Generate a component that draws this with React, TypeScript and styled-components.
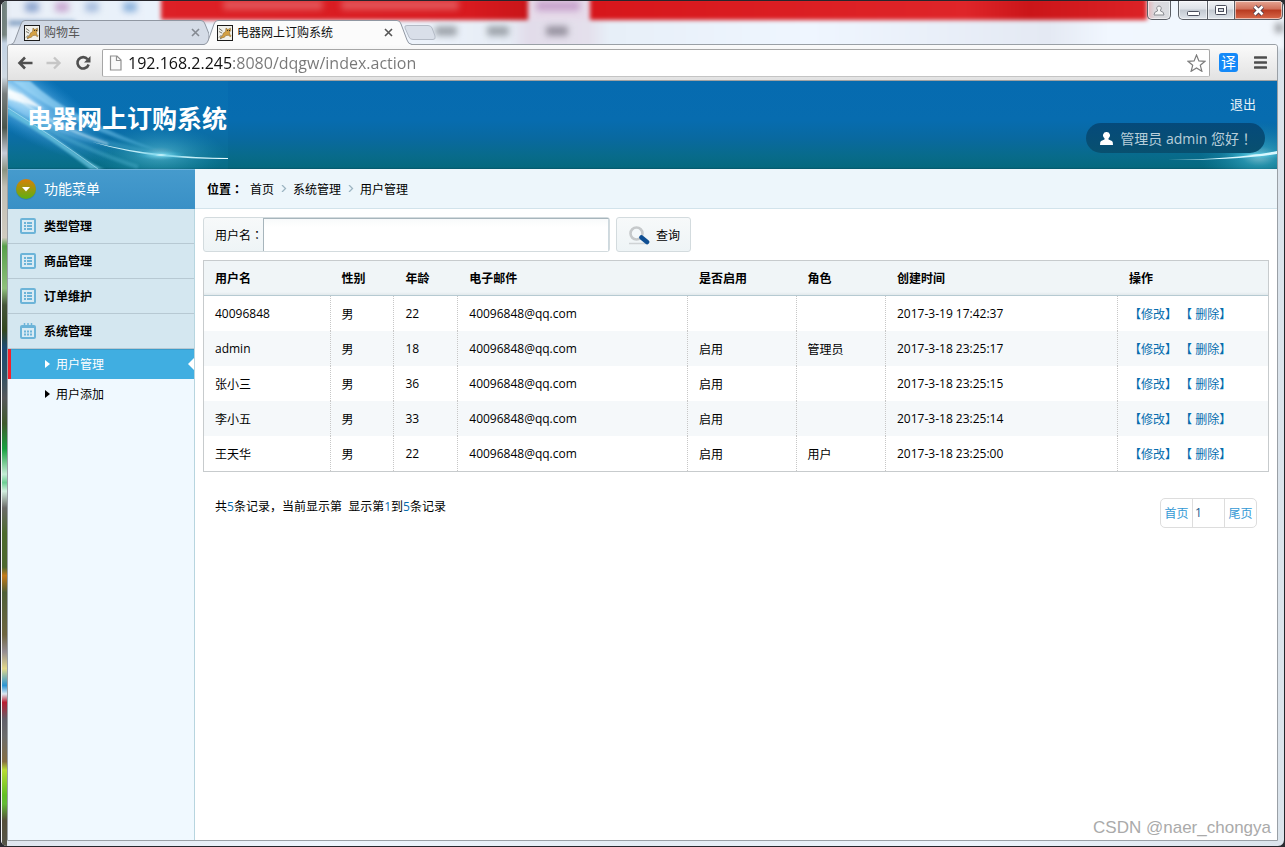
import React from "react";
import styled, { createGlobalStyle, css } from "styled-components";

const GlobalStyle = createGlobalStyle`
  *, *::before, *::after { box-sizing: border-box; }
  body {
    margin: 0;
    background: #2b2b30;
    font-family: "Open Sans", "Noto Sans CJK SC", sans-serif;
    font-size: 12px;
    color: #000;
    text-spacing-trim: space-all;
  }
  button, input { font: inherit; color: inherit; }
  a { color: inherit; text-decoration: none; }
`;

/* ---------- window frame ---------- */

const WindowFrame = styled.div`
  position: relative;
  display: flex;
  flex-direction: column;
  min-height: 100vh;
  padding: 0 6px 5px;
  border: 1px solid #26262c;
  border-radius: 7px;
  overflow: hidden;
  background: linear-gradient(90deg, #dfe5ee, #eef5fd 25%, #e4ecf4 50%, #edf4fc 75%, #dbe4ec);
`;

const LeftGlass = styled.div`
  position: absolute;
  left: 0;
  top: 0;
  bottom: 0;
  width: 6px;
  border-left: 1px solid #f4f6f8;
  background: linear-gradient(
    180deg,
    #6f7f7c 0, #74827e 4%, #c3d3e4 5%, #cfd9e2 9%, #777d7d 11%, #4c564c 15%, #c8ccd8 18%, #8c9482 20%,
    #c2bfb5 22%, #cfcbc0 28%, #57a04b 29%, #8fc07c 34%, #45553a 36%, #33471f 39%, #1d4a73 41%, #2d5164 44%,
    #55575a 47%, #3f5a2c 50%, #18a040 53%, #c5ecd6 56%, #6dcf94 57%, #d2efdf 58%, #6b6b68 60%, #4d6b2d 63%,
    #4d682f 67%, #c47a18 68%, #4f5f37 70%, #6f6640 75%, #958d92 77%, #e2d88a 79%, #2a94d4 81%, #dce9f0 82%,
    #b91f31 83%, #62606a 85%, #6b6c6c 87%, #866f42 90%, #b9dc35 91%, #63bf25 94%, #64ba36 95%, #55503a 97%, #55564a 100%
  );
`;

const TitleBackdrop = styled.div`
  position: absolute;
  left: 8px;
  right: 0;
  top: -4px;
  height: 52px;
  filter: blur(2px);
  background:
    linear-gradient(90deg, #fff0 152px, #dd2026 152px, #d81a1f 460px, #c91519 519px, #e6dbea 519px, #e6dbea 581px, #d7161b 581px, #df2529 75%, #cb1519 80%, #dc2226 1138px, #fff0 1138px) 0 0 / 100% 23px no-repeat,
    linear-gradient(90deg, #8fa9c8 0, #9db7d6 66px, #fff0 66px) 0 23px / 100% 6px no-repeat,
    linear-gradient(90deg, #e9eff7 0, #eaf2fb 150px, #edf3fb 400px, #e6ecf5 500px, #e2dcea 519px, #e4e0ec 580px, #e7eff8 600px, #eff6ff 800px, #e4e9f3 1040px, #f1f7ff 1100px, #f2f7fd 100%);
`;

const Smudge = styled.i<{ $x: number; $y: number; $w: number; $tone: string }>`
  position: absolute;
  left: ${(p) => p.$x}px;
  top: ${(p) => p.$y}px;
  width: ${(p) => p.$w}px;
  height: 10px;
  border-radius: 3px;
  background: ${(p) => p.$tone};
  filter: blur(3px);
`;

const TabStrip = styled.div`
  position: relative;
  z-index: 2;
  display: flex;
  align-items: flex-end;
  height: 44px;
  margin-bottom: -1px;
  padding-left: 4px;
`;

const TabShell = styled.div<{ $active?: boolean }>`
  position: relative;
  z-index: ${(p) => (p.$active ? 2 : 1)};
  display: flex;
  align-items: center;
  width: ${(p) => (p.$active ? 208 : 198)}px;
  height: 25px;
  padding: 0 ${(p) => (p.$active ? 18 : 8)}px 0 13px;
  margin-left: ${(p) => (p.$active ? -5 : 0)}px;
  color: ${(p) => (p.$active ? "#111" : "#555")};
`;

const TabShape = styled.svg`
  position: absolute;
  left: 0;
  top: 0;
  width: 100%;
  height: 25px;
`;

const TabButton = styled.button`
  position: relative;
  display: flex;
  align-items: center;
  flex: 1;
  gap: 4px;
  padding: 0;
  border: 0;
  background: none;
  line-height: 20px;
  text-align: left;
`;

const TabClose = styled.button`
  position: relative;
  display: flex;
  align-items: center;
  justify-content: center;
  width: 12px;
  height: 16px;
  padding: 0;
  border: 0;
  background: none;
`;

const NewTab = styled.button`
  width: 32px;
  height: 25px;
  padding: 0;
  margin-left: -8px;
  border: 0;
  background: none;
  svg { display: block; }
`;

const CaptionButtons = styled.div`
  position: absolute;
  top: 0;
  right: 1px;
  z-index: 3;
  display: flex;
`;

const captionEdge = css`
  border: 1px solid #5b5f66;
  border-top: 0;
`;

const CaptionButton = styled.button<{ $kind: "user" | "min" | "max" | "close" }>`
  ${captionEdge}
  display: flex;
  align-items: center;
  justify-content: center;
  height: 19px;
  padding: 0;
  box-shadow: inset 0 0 0 1px #ffffff90;
  background: linear-gradient(180deg, #f1f3f6 0, #dde1e7 45%, #c3c9d1 50%, #dfe4ea 100%);
  width: ${(p) => ({ user: 24, min: 30, max: 27, close: 48 })[p.$kind]}px;
  ${(p) =>
    p.$kind === "user" &&
    css`
      margin-right: 7px;
      border-radius: 0 0 5px 5px;
      background: linear-gradient(90deg, #e3b9bd 0, #dcd9dd 30%, #d9dce0 100%);
    `}
  ${(p) => p.$kind === "min" && css`border-radius: 0 0 0 5px;`}
  ${(p) => p.$kind === "max" && css`border-left: 0;`}
  ${(p) =>
    p.$kind === "close" &&
    css`
      border-left: 0;
      border-radius: 0 0 5px 0;
      background: linear-gradient(180deg, #e6a694 0, #d0705a 45%, #b83a20 50%, #d9694a 100%);
    `}
`;

/* ---------- browser client area ---------- */

const Client = styled.div`
  position: relative;
  z-index: 1;
  display: flex;
  flex-direction: column;
  flex: 1;
  border: 1px solid #9aa0a6;
  border-radius: 3px 3px 0 0;
  background: #fff;
`;

const Toolbar = styled.div`
  display: flex;
  align-items: center;
  height: 36px;
  padding: 0 7px;
  border-bottom: 1px solid #a2a2a2;
  border-radius: 3px 3px 0 0;
  background: linear-gradient(180deg, #fafafa, #e2e2e2);
`;

const ToolButton = styled.button`
  display: flex;
  align-items: center;
  justify-content: center;
  width: 20px;
  height: 20px;
  padding: 0;
  border: 0;
  background: none;
`;

const NavButtons = styled.div`
  display: flex;
  gap: 9px;
  margin-right: 9px;
`;

const AddressBar = styled.div`
  display: flex;
  align-items: center;
  flex: 1;
  gap: 6px;
  height: 28px;
  padding: 0 3px 0 6px;
  margin-right: 9px;
  border: 1px solid #a6a6a6;
  border-bottom-color: #c4c4c4;
  border-radius: 2px;
  background: #fff;
`;

const AddressInput = styled.input`
  flex: 1;
  min-width: 0;
  height: 24px;
  padding: 0;
  border: 0;
  outline: 0;
  font-size: 16px;
  line-height: 24px;
  color: transparent;
  background: linear-gradient(90deg, #111 105px, #777 105px);
  background-clip: text;
  -webkit-background-clip: text;
`;

const TranslateButton = styled.button`
  width: 19px;
  height: 19px;
  padding: 0;
  margin-right: 12px;
  border: 0;
  border-radius: 3px;
  background: #1489f8;
  color: #fff;
  font-size: 15px;
  line-height: 19px;
`;

/* ---------- site header ---------- */

const SiteHeader = styled.header`
  position: relative;
  display: flex;
  justify-content: space-between;
  height: 88px;
  background: linear-gradient(180deg, #066bb0 0, #076caf 45%, #0969a0 65%, #086b8b 85%, #05697f 98%, #04566a 100%);
`;

const Brand = styled.div`
  position: relative;
  width: 220px;
  height: 88px;
`;

const BrandArt = styled.svg`
  position: absolute;
  left: 0;
  top: 0;
`;

const BrandTitle = styled.h1`
  position: relative;
  margin: 0;
  padding: 19px 0 0 19px;
  font-size: 25px;
  line-height: 36px;
  font-weight: 700;
  white-space: nowrap;
  color: #fff;
`;

const GlowArt = styled.svg`
  position: absolute;
  right: 0;
  bottom: 0;
`;

const Account = styled.div`
  position: relative;
  display: flex;
  flex-direction: column;
  align-items: flex-end;
  padding: 13px 12px 0 0;
`;

const LogoutLink = styled.a`
  margin-right: 9px;
  font-size: 13px;
  line-height: 20px;
  color: #e9f2f7;
`;

const UserPill = styled.div`
  display: flex;
  align-items: center;
  gap: 7px;
  height: 30px;
  margin-top: 9px;
  padding: 0 12px 0 14px;
  border-radius: 15px;
  background: linear-gradient(180deg, #054a7b, #08506f);
  color: #b8ceda;
  font-size: 14px;
  line-height: 30px;
`;

/* Full-width punctuation centred in its em box. */
const Mark = styled.span`
  font-family: "Noto Sans CJK TC", sans-serif;
`;

/* ---------- body ---------- */

const Body = styled.div`
  display: flex;
  flex: 1;
`;

const Sidebar = styled.nav`
  flex: none;
  width: 187px;
  border-right: 1px solid #b7d5df;
  background: #f0f9ff;
`;

const SidebarTitle = styled.h2`
  display: flex;
  align-items: center;
  gap: 8px;
  height: 40px;
  margin: 0 -1px 0 0;
  padding-left: 8px;
  box-shadow: inset 0 1px 0 #6db3dc;
  background: linear-gradient(180deg, #469bcd, #3990c6);
  color: #fff;
  font-size: 14px;
  line-height: 18px;
  font-weight: 400;
`;

const MenuGroup = styled.a`
  display: flex;
  align-items: center;
  gap: 8px;
  height: 35px;
  padding-left: 12px;
  border-bottom: 1px solid #b7c9d3;
  background: #d4e7f0;
  font-weight: 700;
`;

const SubItem = styled.a<{ $active?: boolean }>`
  position: relative;
  display: flex;
  align-items: center;
  gap: 6px;
  height: 30px;
  padding-left: 37px;
  ${(p) =>
    p.$active &&
    css`
      padding-left: 34px;
      border-left: 3px solid #f3202a;
      background: #40aee1;
      box-shadow: inset 0 1px 0 #3b9dcb;
      color: #fff;
    `}
`;

const Pointer = styled.svg`
  position: absolute;
  right: 0;
  top: 9px;
`;

const Main = styled.main`
  flex: 1;
  min-width: 0;
`;

const Breadcrumb = styled.nav`
  display: flex;
  align-items: center;
  gap: 6px;
  height: 40px;
  padding-left: 12px;
  border-bottom: 1px solid #d2e3eb;
  background: #edf6fb;
  b { margin-right: 1px; }
`;

const Content = styled.div`
  padding: 8px;
`;

const SearchForm = styled.form`
  display: flex;
  gap: 6px;
  height: 35px;
  margin-bottom: 8px;
`;

const boxed = css`
  border: 1px solid #d3dbde;
  border-radius: 3px;
  background: linear-gradient(180deg, #f7f9fa, #eef4f6);
`;

const SearchField = styled.div`
  ${boxed}
  display: flex;
  width: 407px;
`;

const SearchLabel = styled.label`
  width: 59px;
  padding-left: 11px;
  line-height: 33px;
  white-space: nowrap;
`;

const SearchInput = styled.input`
  flex: 1;
  min-width: 0;
  padding: 0 8px;
  border: 1px solid #a7b5bc;
  border-right-color: #ced9df;
  border-bottom: 0;
  outline: 0;
  background: linear-gradient(180deg, #f8fafb, #fff 8px);
`;

const SearchButton = styled.button`
  ${boxed}
  display: flex;
  align-items: center;
  gap: 6px;
  width: 75px;
  padding: 0 0 0 11px;
`;

const UserTable = styled.table`
  width: 100%;
  table-layout: fixed;
  border: 1px solid #c7cbcd;
  border-spacing: 0;
  text-align: left;
`;

const HeadCell = styled.th`
  height: 35px;
  padding: 0 0 0 11px;
  border-bottom: 1px solid #b6cad2;
  background: linear-gradient(180deg, #f0f5f7 31px, #e2e9ec 34px);
  font-weight: 700;
`;

const Row = styled.tr`
  &:nth-child(even) { background: #f5f8fa; }
`;

const Cell = styled.td`
  height: 35px;
  padding: 0 0 0 11px;
  border-right: 1px dotted #c7c7c7;
  white-space: nowrap;
  &:last-child { border-right: 0; }
`;

const ActionLink = styled.a`
  color: #056dae;
`;

const TableFooter = styled.div`
  display: flex;
  justify-content: space-between;
  padding: 26px 12px 0;
`;

const Summary = styled.p`
  margin: 0;
  line-height: 18px;
  em { font-style: normal; color: #056dae; }
`;

const Pager = styled.div`
  display: flex;
  height: 30px;
  border: 1px solid #ddd;
  border-radius: 5px;
  color: #3399d5;
  line-height: 30px;
  text-align: center;
  a { width: 31px; }
`;

const PageInput = styled.input`
  width: 33px;
  padding: 0 0 0 2px;
  border: 0;
  border-left: 1px solid #ddd;
  border-right: 1px solid #ddd;
  outline: 0;
  background: none;
  color: #1a5a8c;
`;

const Watermark = styled.div`
  position: absolute;
  right: 13px;
  bottom: 8px;
  z-index: 4;
  font-family: "Liberation Sans", sans-serif;
  font-size: 17px;
  line-height: 20px;
  color: #aaa;
`;

/* ---------- drawings ---------- */

const CatIcon = () => (
  <svg width="16" height="16" viewBox="0 0 16 16">
    <rect x=".5" y=".5" width="15" height="15" fill="#f1f0ea" stroke="#1b1b1b" />
    <path d="M2 3.500l3.500 2.500M2 6.500L5 8M2 12.500l2.500-2.500M3 14l2-1.500" stroke="#77776c" fill="none" />
    <path d="M9 3l1.300 1.200h1.600L13.300 3l.4 2.600-1.200 1.700.3 2 1.400 1.600-.7.8-2.200-1.400-2.500.2-1.300 1.700-3.600 1-.8-.8 2.400-1.600.7-2.600L8.600 6.600z" fill="#d3a044" stroke="#7a5a24" strokeWidth=".5" />
    <path d="M10.200 5.500h.9M12.100 5.500h.9" stroke="#222" />
  </svg>
);

const CloseGlyph = ({ tone }: { tone: string }) => (
  <svg width="9" height="9" viewBox="0 0 9 9">
    <path d="M1 1l7 7M8 1 1 8" stroke={tone} strokeWidth="1.600" />
  </svg>
);

const ListIcon = () => (
  <svg width="16" height="16" viewBox="0 0 16 16">
    <rect x="1" y="1" width="14" height="14" rx="1" fill="#d9ebf4" stroke="#6cb4d8" strokeWidth="2" />
    <path d="M4 5h2M7 5h5M4 8h2M7 8h5M4 11h2M7 11h5" stroke="#6cb4d8" strokeWidth="2" />
  </svg>
);

const CalendarIcon = () => (
  <svg width="16" height="16" viewBox="0 0 16 16">
    <rect x="1" y="3" width="14" height="12" rx="1" fill="#d9ebf4" stroke="#6cb4d8" strokeWidth="2" />
    <path d="M1 4h14" stroke="#6cb4d8" strokeWidth="2" />
    <path d="M4.500 0v3M8 0v3M11.500 0v3" stroke="#6cb4d8" strokeWidth="1.500" />
    <path d="M4 8.500h2M7 8.500h2M10 8.500h2M4 11.500h2M7 11.500h2M10 11.500h2" stroke="#6cb4d8" strokeWidth="2" />
  </svg>
);

const Caret = () => (
  <svg width="5" height="8" viewBox="0 0 5 8">
    <path d="M0 0l5 4-5 4z" fill="currentColor" />
  </svg>
);

const Chevron = () => (
  <svg width="7" height="7" viewBox="0 0 7 7">
    <path d="M2 0l3.500 3.500L2 7" fill="none" stroke="#9db5c2" strokeWidth="1.300" />
  </svg>
);

const Tab = ({ title, active }: { title: string; active?: boolean }) => (
  <TabShell $active={active}>
    {active ? (
      <TabShape viewBox="0 0 208 25" aria-hidden="true">
        <path d="M0 24.500Q3 24 4 21L10 4Q11 .5 14 .5H193Q196 .5 197 4L203 20Q204 24 208 24.500V25H0z" fill="#fbfbfb" />
        <path d="M0 24.500Q3 24 4 21L10 4Q11 .5 14 .5H193Q196 .5 197 4L203 20Q204 24 208 24.500" fill="none" stroke="#9097a2" />
      </TabShape>
    ) : (
      <TabShape viewBox="0 0 198 25" aria-hidden="true">
        <path d="M0 24.500Q3 24 4 20L10 4Q11 .5 14 .5H190Q193 .5 194 4L198 14V24.500z" fill="#d3dae5" fillOpacity=".93" stroke="#9097a2" />
      </TabShape>
    )}
    <TabButton type="button">
      <CatIcon />
      {title}
    </TabButton>
    <TabClose type="button" aria-label="关闭">
      <CloseGlyph tone={active ? "#555" : "#858a92"} />
    </TabClose>
  </TabShell>
);

const LogoArt = () => (
  <BrandArt width="220" height="88" viewBox="0 0 220 88" aria-hidden="true">
    <defs>
      <radialGradient id="corner" cx="0" cy="0" r="1" gradientUnits="userSpaceOnUse" gradientTransform="translate(2 12) rotate(32) scale(120 34)">
        <stop offset="0" stopColor="#e6f9ff" />
        <stop offset=".3" stopColor="#8ccbf5" stopOpacity=".85" />
        <stop offset="1" stopColor="#2f95d8" stopOpacity="0" />
      </radialGradient>
      <radialGradient id="flare">
        <stop offset="0" stopColor="#eafdff" />
        <stop offset=".25" stopColor="#6fd4ec" stopOpacity=".75" />
        <stop offset="1" stopColor="#2aa6cc" stopOpacity="0" />
      </radialGradient>
      <linearGradient id="beam" x1="0" x2="220" gradientUnits="userSpaceOnUse">
        <stop offset="0" stopColor="#a6dbfa" stopOpacity=".9" />
        <stop offset=".5" stopColor="#5fb6e2" stopOpacity=".6" />
        <stop offset="1" stopColor="#2a93c0" stopOpacity="0" />
      </linearGradient>
      <filter id="soft" x="-10%" y="-10%" width="120%" height="120%">
        <feGaussianBlur stdDeviation="1" />
      </filter>
    </defs>
    <rect width="220" height="88" fill="#1a8fc8" opacity=".1" />
    <rect width="220" height="88" fill="url(#corner)" />
    <path d="M4 0H22Q60 36 152 70Q70 50 4 0z" fill="url(#beam)" filter="url(#soft)" />
    <path d="M0 16Q50 46 110 62L150 72Q60 66 0 24z" fill="url(#beam)" opacity=".45" filter="url(#soft)" />
    <path d="M0 27Q30 44 60 66T98 88H82Q40 56 0 33z" fill="#6cc6e0" opacity=".75" filter="url(#soft)" />
    <path d="M26 40Q70 66 130 86" stroke="#5cb8d4" strokeWidth="4" fill="none" opacity=".35" filter="url(#soft)" />
    <path d="M0 27Q40 52 90 88" stroke="#b7e8f7" fill="none" opacity=".6" />
    <path d="M0 8Q30 40 100 63" stroke="#e6f8ff" strokeWidth="1.500" fill="none" opacity=".7" filter="url(#soft)" />
    <path d="M84 61Q120 70 152 73Q190 77 220 77V78Q190 78.500 152 75Q118 71 84 61z" fill="#e8fcff" />
    <ellipse cx="152" cy="73" rx="66" ry="28" fill="url(#flare)" opacity=".5" />
    <ellipse cx="153" cy="74" rx="26" ry="5" fill="url(#flare)" />
    <path d="M0 9L14 13 36 28 16 22 0 18z" fill="#fff" opacity=".75" filter="url(#soft)" />
  </BrandArt>
);

const HeaderGlow = () => (
  <GlowArt width="150" height="60" viewBox="0 0 150 60" aria-hidden="true">
    <defs>
      <radialGradient id="glow">
        <stop offset="0" stopColor="#d8fbff" />
        <stop offset=".3" stopColor="#4cc3de" stopOpacity=".7" />
        <stop offset="1" stopColor="#1c93b4" stopOpacity="0" />
      </radialGradient>
    </defs>
    <ellipse cx="132" cy="47" rx="60" ry="34" fill="url(#glow)" opacity=".6" />
    <ellipse cx="130" cy="46" rx="36" ry="5" fill="url(#glow)" />
    <path d="M40 51Q110 50 150 42V45Q110 51 40 51z" fill="#d8f8ff" />
  </GlowArt>
);

const users = [
  ["40096848", "男", "22", "40096848@qq.com", "", "", "2017-3-19 17:42:37"],
  ["admin", "男", "18", "40096848@qq.com", "启用", "管理员", "2017-3-18 23:25:17"],
  ["张小三", "男", "36", "40096848@qq.com", "启用", "", "2017-3-18 23:25:15"],
  ["李小五", "男", "33", "40096848@qq.com", "启用", "", "2017-3-18 23:25:14"],
  ["王天华", "男", "22", "40096848@qq.com", "启用", "用户", "2017-3-18 23:25:00"],
];

const columns: [string, string][] = [
  ["用户名", "11.9%"],
  ["性别", "6%"],
  ["年龄", "6%"],
  ["电子邮件", "21.6%"],
  ["是否启用", "10.2%"],
  ["角色", "8.4%"],
  ["创建时间", "21.8%"],
  ["操作", "14.1%"],
];

const smudges: [number, number, number, string][] = [
  [24, 1, 14, "#8ea6cf"],
  [54, 1, 14, "#c9a9d2"],
  [84, 1, 14, "#a9bfdf"],
  [122, 1, 14, "#8eb4dd"],
  [222, -1, 100, "#e25357"],
  [340, -1, 118, "#e25357"],
  [535, 0, 44, "#c8a4cd"],
  [434, 25, 22, "#a0a6ad"],
  [486, 25, 22, "#a0a6ad"],
  [545, 25, 22, "#9995a2"],
  [1274, 22, 8, "#9a9da2"],
];

export default function App() {
  return (
    <WindowFrame>
      <GlobalStyle />
      <LeftGlass />
      <TitleBackdrop />
      {smudges.map(([x, y, w, tone]) => (
        <Smudge key={`${x}-${y}`} $x={x} $y={y} $w={w} $tone={tone} />
      ))}

      <TabStrip>
        <Tab title="购物车" />
        <Tab title="电器网上订购系统" active />
        <NewTab type="button" aria-label="新标签页">
          <svg width="32" height="25" viewBox="0 0 32 25">
            <path d="M1 8Q0 5.500 3 5.500H24Q27 5.500 28 8L31 16Q32 19.500 29 19.500H9Q6 19.500 5 17z" fill="#d9dfe9" stroke="#b4bbc6" />
          </svg>
        </NewTab>
      </TabStrip>

      <CaptionButtons>
        <CaptionButton type="button" $kind="user" aria-label="用户">
          <svg width="12" height="11" viewBox="0 0 12 11">
            <path d="M6 1a2.300 2.300 0 0 1 1.500 4L7.500 6Q11 6.500 11 10H1Q1 6.500 4.500 6L4.500 5A2.300 2.300 0 0 1 6 1z" fill="#f4f4f4" stroke="#8a8d92" />
          </svg>
        </CaptionButton>
        <CaptionButton type="button" $kind="min" aria-label="最小化">
          <svg width="13" height="11" viewBox="0 0 13 11">
            <rect x=".5" y="6.500" width="12" height="4" rx="1" fill="#fff" stroke="#4b4e5c" />
          </svg>
        </CaptionButton>
        <CaptionButton type="button" $kind="max" aria-label="最大化">
          <svg width="12" height="10" viewBox="0 0 12 10">
            <rect x=".5" y=".5" width="11" height="9" rx="1" fill="#fff" stroke="#4b4e5c" />
            <rect x="3.500" y="3.500" width="5" height="3" fill="#d4d8de" stroke="#4b4e5c" />
          </svg>
        </CaptionButton>
        <CaptionButton type="button" $kind="close" aria-label="关闭窗口">
          <svg width="13" height="11" viewBox="0 0 13 11">
            <path d="M2.500 1.500l8 8M10.500 1.500l-8 8" stroke="#4b3b4a" strokeWidth="4.400" />
            <path d="M2.500 1.500l8 8M10.500 1.500l-8 8" stroke="#fff" strokeWidth="2.600" />
          </svg>
        </CaptionButton>
      </CaptionButtons>

      <Client>
        <Toolbar>
          <NavButtons>
            <ToolButton type="button" aria-label="后退">
              <svg width="16" height="14" viewBox="0 0 16 14">
                <path d="M15.500 7H2.500M8 1.500L2.500 7 8 12.500" fill="none" stroke="#4f4f4f" strokeWidth="2.600" />
              </svg>
            </ToolButton>
            <ToolButton type="button" aria-label="前进">
              <svg width="16" height="14" viewBox="0 0 16 14">
                <path d="M.5 7h13M8 1.500L13.500 7 8 12.500" fill="none" stroke="#c6c6c6" strokeWidth="2.400" />
              </svg>
            </ToolButton>
            <ToolButton type="button" aria-label="刷新">
              <svg width="16" height="16" viewBox="0 0 16 16">
                <path d="M12.600 4.200A5.700 5.700 0 1 0 13.600 9.500" fill="none" stroke="#4f4f4f" strokeWidth="2.600" />
                <path d="M15.500 1v6.500H9z" fill="#4f4f4f" />
              </svg>
            </ToolButton>
          </NavButtons>
          <AddressBar>
            <svg width="13" height="16" viewBox="0 0 13 16" aria-hidden="true">
              <path d="M1.500 1h6.500l4 4v10H1.500zM7.500 1v4.500H12" fill="#fafafa" stroke="#909090" strokeWidth="1.200" />
            </svg>
            <AddressInput aria-label="地址" defaultValue="192.168.2.245:8080/dqgw/index.action" spellCheck={false} />
            <ToolButton type="button" aria-label="收藏">
              <svg width="19" height="18" viewBox="0 0 19 18">
                <path d="M9.500 1l2.400 5.900 6.100.4-4.700 4 1.600 6-5.400-3.400L4.100 17.300l1.600-6L1 7.300l6.100-.4z" fill="#fff" stroke="#7d7d7d" strokeWidth="1.200" />
              </svg>
            </ToolButton>
          </AddressBar>
          <TranslateButton type="button">译</TranslateButton>
          <ToolButton type="button" aria-label="菜单">
            <svg width="13" height="13" viewBox="0 0 13 13">
              <path d="M1 1.500h11M1 6.500h11M1 11.500h11" stroke="#4d4d4d" strokeWidth="2.600" strokeLinecap="round" />
            </svg>
          </ToolButton>
        </Toolbar>

        <SiteHeader>
          <HeaderGlow />
          <Brand>
            <LogoArt />
            <BrandTitle>电器网上订购系统</BrandTitle>
          </Brand>
          <Account>
            <LogoutLink href="#logout">退出</LogoutLink>
            <UserPill>
              <svg width="13" height="13" viewBox="0 0 13 13" aria-hidden="true">
                <path d="M6.500 0a3.400 3.400 0 0 1 2 6.200v1.300L12 9q1 .5 1 4H0q0-3.500 1-4l3.500-1.500V6.200A3.400 3.400 0 0 1 6.500 0z" fill="#fff" />
              </svg>
              <span>
                管理员 admin 您好<Mark>！</Mark>
              </span>
            </UserPill>
          </Account>
        </SiteHeader>

        <Body>
          <Sidebar>
            <SidebarTitle>
              <svg width="20" height="21" viewBox="0 0 20 21" aria-hidden="true">
                <defs>
                  <linearGradient id="badge" x2="0" y2="1">
                    <stop offset="0" stopColor="#d98008" />
                    <stop offset="1" stopColor="#5cb012" />
                  </linearGradient>
                </defs>
                <circle cx="10" cy="11" r="10" fill="#2b6f9b" opacity=".5" />
                <circle cx="10" cy="10" r="10" fill="url(#badge)" />
                <path d="M6 8h8l-4 4.500z" fill="#fff" />
              </svg>
              功能菜单
            </SidebarTitle>
            <MenuGroup href="#types"><ListIcon />类型管理</MenuGroup>
            <MenuGroup href="#goods"><ListIcon />商品管理</MenuGroup>
            <MenuGroup href="#orders"><ListIcon />订单维护</MenuGroup>
            <MenuGroup href="#system"><CalendarIcon />系统管理</MenuGroup>
            <SubItem href="#users" $active>
              <Caret />
              用户管理
              <Pointer width="6" height="12" viewBox="0 0 6 12"><path d="M6 0v12L0 6z" fill="#fff" /></Pointer>
            </SubItem>
            <SubItem href="#add"><Caret />用户添加</SubItem>
          </Sidebar>

          <Main>
            <Breadcrumb>
              <b>位置<Mark>：</Mark></b>
              <a href="#home">首页</a>
              <Chevron />
              <a href="#system">系统管理</a>
              <Chevron />
              <a href="#users">用户管理</a>
            </Breadcrumb>

            <Content>
              <SearchForm onSubmit={(e) => e.preventDefault()}>
                <SearchField>
                  <SearchLabel htmlFor="username">用户名<Mark>：</Mark></SearchLabel>
                  <SearchInput id="username" type="text" />
                </SearchField>
                <SearchButton type="submit">
                  <svg width="22" height="20" viewBox="0 0 22 20" aria-hidden="true">
                    <path d="M1 18.500h17" stroke="#cfd3d5" strokeWidth="1.500" />
                    <circle cx="8.500" cy="8.500" r="6" fill="#f4f8fa" stroke="#c6c9cb" strokeWidth="2.600" />
                    <path d="M13.500 12.500l5.500 4.500" stroke="#0f4f93" strokeWidth="4.600" strokeLinecap="round" />
                  </svg>
                  查询
                </SearchButton>
              </SearchForm>

              <UserTable>
                <colgroup>
                  {columns.map(([name, width]) => (
                    <col key={name} width={width} />
                  ))}
                </colgroup>
                <thead>
                  <tr>
                    {columns.map(([name]) => (
                      <HeadCell key={name} scope="col">{name}</HeadCell>
                    ))}
                  </tr>
                </thead>
                <tbody>
                  {users.map((user) => (
                    <Row key={user[6]}>
                      {user.map((value, i) => (
                        <Cell key={i}>{value}</Cell>
                      ))}
                      <Cell>
                        <ActionLink href="#edit">【修改】</ActionLink>{" "}
                        <ActionLink href="#delete">【 删除】</ActionLink>
                      </Cell>
                    </Row>
                  ))}
                </tbody>
              </UserTable>

              <TableFooter>
                <Summary>
                  共<em>5</em>条记录，当前显示第&nbsp; 显示第<em>1</em>到<em>5</em>条记录
                </Summary>
                <Pager>
                  <a href="#first">首页</a>
                  <PageInput aria-label="页码" defaultValue="1" />
                  <a href="#last">尾页</a>
                </Pager>
              </TableFooter>
            </Content>
          </Main>
        </Body>
      </Client>
      <Watermark>CSDN @naer_chongya</Watermark>
    </WindowFrame>
  );
}
